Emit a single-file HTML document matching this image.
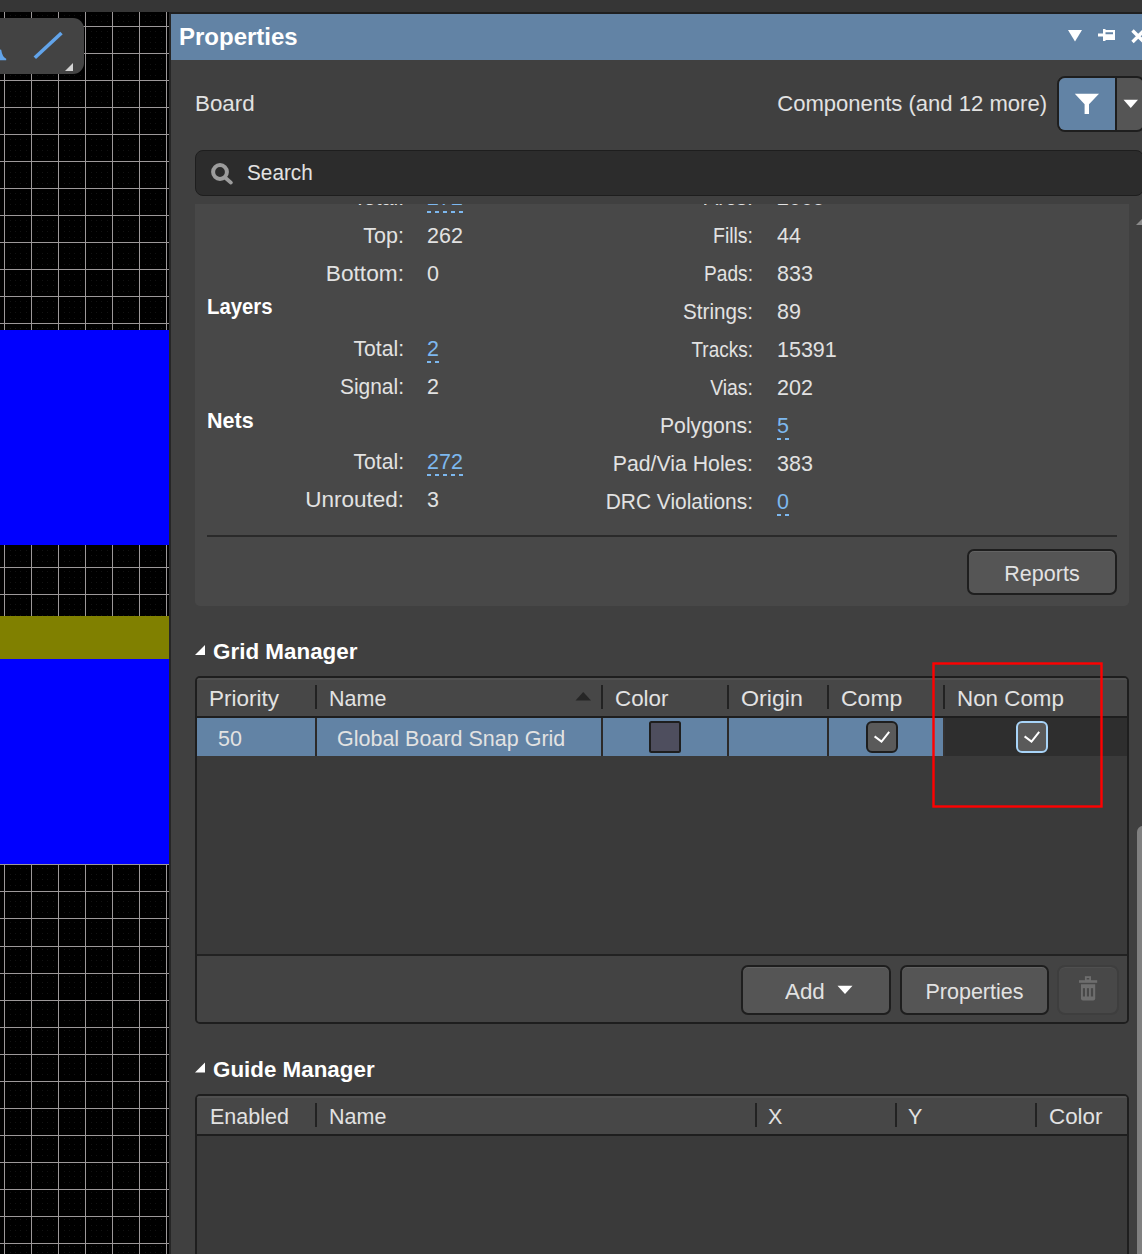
<!DOCTYPE html>
<html><head><meta charset="utf-8"><style>
html,body{margin:0;padding:0;width:1142px;height:1254px;overflow:hidden;background:#404040;font-family:"Liberation Sans",sans-serif;}
body{position:relative}
</style></head><body>
<div style="position:absolute;left:0px;top:0px;width:1142px;height:12px;background:#363636;"></div>
<div style="position:absolute;left:0px;top:12px;width:169px;height:1242px;background:#000;"></div>
<svg style="position:absolute;left:0;top:12px" width="169" height="1242"><defs><pattern id="dp" patternUnits="userSpaceOnUse" x="4" y="14" width="27" height="27"><g fill="#131313"><rect x="6" y="5" width="1" height="1"/><rect x="6" y="11" width="1" height="1"/><rect x="6" y="16" width="1" height="1"/><rect x="6" y="22" width="1" height="1"/><rect x="11" y="5" width="1" height="1"/><rect x="11" y="11" width="1" height="1"/><rect x="11" y="16" width="1" height="1"/><rect x="11" y="22" width="1" height="1"/><rect x="16" y="5" width="1" height="1"/><rect x="16" y="11" width="1" height="1"/><rect x="16" y="16" width="1" height="1"/><rect x="16" y="22" width="1" height="1"/><rect x="22" y="5" width="1" height="1"/><rect x="22" y="11" width="1" height="1"/><rect x="22" y="16" width="1" height="1"/><rect x="22" y="22" width="1" height="1"/></g></pattern></defs><rect width="169" height="1242" fill="url(#dp)"/></svg>
<div style="position:absolute;left:4px;top:12px;width:1px;height:1242px;background:#9c9899;"></div>
<div style="position:absolute;left:31px;top:12px;width:1px;height:1242px;background:#9c9899;"></div>
<div style="position:absolute;left:58px;top:12px;width:1px;height:1242px;background:#9c9899;"></div>
<div style="position:absolute;left:85px;top:12px;width:1px;height:1242px;background:#9c9899;"></div>
<div style="position:absolute;left:112px;top:12px;width:1px;height:1242px;background:#9c9899;"></div>
<div style="position:absolute;left:139px;top:12px;width:1px;height:1242px;background:#9c9899;"></div>
<div style="position:absolute;left:166px;top:12px;width:1px;height:1242px;background:#9c9899;"></div>
<div style="position:absolute;left:0px;top:26px;width:169px;height:1px;background:#9c9899;"></div>
<div style="position:absolute;left:0px;top:53px;width:169px;height:1px;background:#9c9899;"></div>
<div style="position:absolute;left:0px;top:80px;width:169px;height:1px;background:#9c9899;"></div>
<div style="position:absolute;left:0px;top:107px;width:169px;height:1px;background:#9c9899;"></div>
<div style="position:absolute;left:0px;top:134px;width:169px;height:1px;background:#9c9899;"></div>
<div style="position:absolute;left:0px;top:161px;width:169px;height:1px;background:#9c9899;"></div>
<div style="position:absolute;left:0px;top:188px;width:169px;height:1px;background:#9c9899;"></div>
<div style="position:absolute;left:0px;top:215px;width:169px;height:1px;background:#9c9899;"></div>
<div style="position:absolute;left:0px;top:242px;width:169px;height:1px;background:#9c9899;"></div>
<div style="position:absolute;left:0px;top:269px;width:169px;height:1px;background:#9c9899;"></div>
<div style="position:absolute;left:0px;top:296px;width:169px;height:1px;background:#9c9899;"></div>
<div style="position:absolute;left:0px;top:323px;width:169px;height:1px;background:#9c9899;"></div>
<div style="position:absolute;left:0px;top:350px;width:169px;height:1px;background:#9c9899;"></div>
<div style="position:absolute;left:0px;top:377px;width:169px;height:1px;background:#9c9899;"></div>
<div style="position:absolute;left:0px;top:405px;width:169px;height:1px;background:#9c9899;"></div>
<div style="position:absolute;left:0px;top:432px;width:169px;height:1px;background:#9c9899;"></div>
<div style="position:absolute;left:0px;top:459px;width:169px;height:1px;background:#9c9899;"></div>
<div style="position:absolute;left:0px;top:486px;width:169px;height:1px;background:#9c9899;"></div>
<div style="position:absolute;left:0px;top:513px;width:169px;height:1px;background:#9c9899;"></div>
<div style="position:absolute;left:0px;top:540px;width:169px;height:1px;background:#9c9899;"></div>
<div style="position:absolute;left:0px;top:567px;width:169px;height:1px;background:#9c9899;"></div>
<div style="position:absolute;left:0px;top:594px;width:169px;height:1px;background:#9c9899;"></div>
<div style="position:absolute;left:0px;top:621px;width:169px;height:1px;background:#9c9899;"></div>
<div style="position:absolute;left:0px;top:648px;width:169px;height:1px;background:#9c9899;"></div>
<div style="position:absolute;left:0px;top:675px;width:169px;height:1px;background:#9c9899;"></div>
<div style="position:absolute;left:0px;top:702px;width:169px;height:1px;background:#9c9899;"></div>
<div style="position:absolute;left:0px;top:729px;width:169px;height:1px;background:#9c9899;"></div>
<div style="position:absolute;left:0px;top:756px;width:169px;height:1px;background:#9c9899;"></div>
<div style="position:absolute;left:0px;top:783px;width:169px;height:1px;background:#9c9899;"></div>
<div style="position:absolute;left:0px;top:810px;width:169px;height:1px;background:#9c9899;"></div>
<div style="position:absolute;left:0px;top:837px;width:169px;height:1px;background:#9c9899;"></div>
<div style="position:absolute;left:0px;top:864px;width:169px;height:1px;background:#9c9899;"></div>
<div style="position:absolute;left:0px;top:891px;width:169px;height:1px;background:#9c9899;"></div>
<div style="position:absolute;left:0px;top:918px;width:169px;height:1px;background:#9c9899;"></div>
<div style="position:absolute;left:0px;top:946px;width:169px;height:1px;background:#9c9899;"></div>
<div style="position:absolute;left:0px;top:973px;width:169px;height:1px;background:#9c9899;"></div>
<div style="position:absolute;left:0px;top:1000px;width:169px;height:1px;background:#9c9899;"></div>
<div style="position:absolute;left:0px;top:1027px;width:169px;height:1px;background:#9c9899;"></div>
<div style="position:absolute;left:0px;top:1054px;width:169px;height:1px;background:#9c9899;"></div>
<div style="position:absolute;left:0px;top:1081px;width:169px;height:1px;background:#9c9899;"></div>
<div style="position:absolute;left:0px;top:1108px;width:169px;height:1px;background:#9c9899;"></div>
<div style="position:absolute;left:0px;top:1135px;width:169px;height:1px;background:#9c9899;"></div>
<div style="position:absolute;left:0px;top:1162px;width:169px;height:1px;background:#9c9899;"></div>
<div style="position:absolute;left:0px;top:1189px;width:169px;height:1px;background:#9c9899;"></div>
<div style="position:absolute;left:0px;top:1216px;width:169px;height:1px;background:#9c9899;"></div>
<div style="position:absolute;left:0px;top:1243px;width:169px;height:1px;background:#9c9899;"></div>
<div style="position:absolute;left:0px;top:330px;width:169px;height:215px;background:#0000ff;"></div>
<div style="position:absolute;left:0px;top:616px;width:169px;height:43px;background:#808000;"></div>
<div style="position:absolute;left:0px;top:659px;width:169px;height:205px;background:#0000ff;"></div>
<div style="position:absolute;left:-12px;top:18px;width:96px;height:56px;background:#434343;border-radius:11px;"></div>
<svg style="position:absolute;left:0;top:0" width="90" height="80"><line x1="34.8" y1="57.8" x2="61.5" y2="33" stroke="#62a4ea" stroke-width="3.6"/><polygon points="65,71 73,63 73,71" fill="#d4d4d4"/><path d="M0,49.5 L1.2,49.8 Q2.3,57.2 6.2,58.8 L6.2,60.3 L0,60.3 Z" fill="#62a4ea"/></svg>
<div style="position:absolute;left:169px;top:12px;width:2px;height:1242px;background:#262626;"></div>
<div style="position:absolute;left:169px;top:12px;width:973px;height:2px;background:#1f1f1f;"></div>
<div style="position:absolute;left:171px;top:14px;width:971px;height:1240px;background:#404040;"></div>
<div style="position:absolute;left:171px;top:14px;width:971px;height:46px;background:#6283a5;"></div>
<div style="position:absolute;left:179px;top:25.48px;font-size:24px;line-height:24px;font-weight:700;color:#fff;white-space:nowrap;">Properties</div>
<svg style="position:absolute;left:1060px;top:20px" width="82" height="30"><polygon points="8,10 22,10 15,21.5" fill="#fff"/><rect x="38" y="13.5" width="6" height="3" fill="#fff"/><rect x="43" y="9" width="2.5" height="12" fill="#fff"/><path d="M45,10 H55 V20 H45 Z M45,12.2 V14.2 H53 V12.2 Z" fill="#fff" fill-rule="evenodd"/><path d="M72.5,10.5 L84,22 M72.5,22 L84,10.5" stroke="#fff" stroke-width="3.4"/></svg>
<div style="position:absolute;left:195px;top:93.60px;font-size:21.5px;line-height:21.5px;font-weight:400;color:#e2e2e2;white-space:nowrap;transform:scale(1.04,1.045);transform-origin:0 18.20px;">Board</div>
<div style="position:absolute;left:447px;width:600px;text-align:right;top:93.60px;font-size:21.5px;line-height:21.5px;font-weight:400;color:#e2e2e2;white-space:nowrap;transform:scale(1.026,1.045);transform-origin:100% 18.20px;">Components (and 12 more)</div>
<div style="position:absolute;left:1057px;top:76px;width:88px;height:56px;box-sizing:border-box;border:2px solid #1e1e1e;border-radius:8px;background:#555;overflow:hidden"><div style="position:absolute;left:0;top:0;width:56px;height:52px;background:#6283a5"></div><div style="position:absolute;left:56px;top:0;width:2px;height:52px;background:#1e1e1e"></div></div>
<svg style="position:absolute;left:1070px;top:90px" width="72" height="30"><polygon points="4.8,3.8 29,3.8 19,14.3 19,24.1 14.6,24.1 14.6,14.3" fill="#fff"/><polygon points="53.5,9.8 68,9.8 60.75,17.9" fill="#fff"/></svg>
<div style="position:absolute;left:195px;top:150px;width:949px;height:46px;box-sizing:border-box;border:1.5px solid #1e1e1e;border-radius:8px;background:#2c2c2c"></div>
<svg style="position:absolute;left:205px;top:158px" width="34" height="34"><circle cx="15" cy="14" r="6.9" stroke="#9d9d9d" stroke-width="4" fill="none"/><line x1="20" y1="19.5" x2="25.9" y2="24.6" stroke="#9d9d9d" stroke-width="3.8" stroke-linecap="round"/></svg>
<div style="position:absolute;left:247px;top:162.60px;font-size:21.5px;line-height:21.5px;font-weight:400;color:#e2e2e2;white-space:nowrap;transform:scale(0.965,1.045);transform-origin:0 18.20px;">Search</div>
<div style="position:absolute;left:195px;top:204px;width:934px;height:402px;background:#484848;border-radius:0 0 5px 5px;overflow:hidden">
<div style="position:absolute;left:-391px;width:600px;text-align:right;top:-15.90px;font-size:21.5px;line-height:21.5px;font-weight:400;color:#e2e2e2;white-space:nowrap;transform:scale(0.982,1.045);transform-origin:100% 18.20px;">Total:</div>
<div style="position:absolute;left:-391px;width:600px;text-align:right;top:21.60px;font-size:21.5px;line-height:21.5px;font-weight:400;color:#e2e2e2;white-space:nowrap;transform:scale(1.0,1.045);transform-origin:100% 18.20px;">Top:</div>
<div style="position:absolute;left:-391px;width:600px;text-align:right;top:59.60px;font-size:21.5px;line-height:21.5px;font-weight:400;color:#e2e2e2;white-space:nowrap;transform:scale(1.056,1.045);transform-origin:100% 18.20px;">Bottom:</div>
<div style="position:absolute;left:-391px;width:600px;text-align:right;top:134.60px;font-size:21.5px;line-height:21.5px;font-weight:400;color:#e2e2e2;white-space:nowrap;transform:scale(0.982,1.045);transform-origin:100% 18.20px;">Total:</div>
<div style="position:absolute;left:-391px;width:600px;text-align:right;top:172.60px;font-size:21.5px;line-height:21.5px;font-weight:400;color:#e2e2e2;white-space:nowrap;transform:scale(0.975,1.045);transform-origin:100% 18.20px;">Signal:</div>
<div style="position:absolute;left:-391px;width:600px;text-align:right;top:247.60px;font-size:21.5px;line-height:21.5px;font-weight:400;color:#e2e2e2;white-space:nowrap;transform:scale(0.982,1.045);transform-origin:100% 18.20px;">Total:</div>
<div style="position:absolute;left:-391px;width:600px;text-align:right;top:285.60px;font-size:21.5px;line-height:21.5px;font-weight:400;color:#e2e2e2;white-space:nowrap;transform:scale(1.047,1.045);transform-origin:100% 18.20px;">Unrouted:</div>
<div style="position:absolute;left:232px;top:-15.90px;font-size:21.5px;line-height:21.5px;font-weight:400;color:#7db8ef;white-space:nowrap;transform:scale(1.0,1.045);transform-origin:0 18.20px;">272</div>
<div style="position:absolute;left:232px;top:7px;width:36px;height:2px;background:repeating-linear-gradient(90deg,#7db8ef 0 4px,transparent 4px 8px)"></div>
<div style="position:absolute;left:232px;top:21.60px;font-size:21.5px;line-height:21.5px;font-weight:400;color:#e2e2e2;white-space:nowrap;transform:scale(1.0,1.045);transform-origin:0 18.20px;">262</div>
<div style="position:absolute;left:232px;top:59.60px;font-size:21.5px;line-height:21.5px;font-weight:400;color:#e2e2e2;white-space:nowrap;transform:scale(1.0,1.045);transform-origin:0 18.20px;">0</div>
<div style="position:absolute;left:232px;top:134.60px;font-size:21.5px;line-height:21.5px;font-weight:400;color:#7db8ef;white-space:nowrap;transform:scale(1.0,1.045);transform-origin:0 18.20px;">2</div>
<div style="position:absolute;left:232px;top:157px;width:12px;height:2px;background:repeating-linear-gradient(90deg,#7db8ef 0 4px,transparent 4px 8px)"></div>
<div style="position:absolute;left:232px;top:172.60px;font-size:21.5px;line-height:21.5px;font-weight:400;color:#e2e2e2;white-space:nowrap;transform:scale(1.0,1.045);transform-origin:0 18.20px;">2</div>
<div style="position:absolute;left:232px;top:247.60px;font-size:21.5px;line-height:21.5px;font-weight:400;color:#7db8ef;white-space:nowrap;transform:scale(1.0,1.045);transform-origin:0 18.20px;">272</div>
<div style="position:absolute;left:232px;top:270px;width:36px;height:2px;background:repeating-linear-gradient(90deg,#7db8ef 0 4px,transparent 4px 8px)"></div>
<div style="position:absolute;left:232px;top:285.60px;font-size:21.5px;line-height:21.5px;font-weight:400;color:#e2e2e2;white-space:nowrap;transform:scale(1.0,1.045);transform-origin:0 18.20px;">3</div>
<div style="position:absolute;left:12px;top:92.60px;font-size:21.5px;line-height:21.5px;font-weight:700;color:#fff;white-space:nowrap;transform:scale(0.945,1.0);transform-origin:0 18.20px;">Layers</div>
<div style="position:absolute;left:12px;top:206.60px;font-size:21.5px;line-height:21.5px;font-weight:700;color:#fff;white-space:nowrap;">Nets</div>
<div style="position:absolute;left:-42px;width:600px;text-align:right;top:-15.90px;font-size:21.5px;line-height:21.5px;font-weight:400;color:#e2e2e2;white-space:nowrap;transform:scale(1.0,1.045);transform-origin:100% 18.20px;">Arcs:</div>
<div style="position:absolute;left:582px;top:-15.90px;font-size:21.5px;line-height:21.5px;font-weight:400;color:#e2e2e2;white-space:nowrap;transform:scale(1.0,1.045);transform-origin:0 18.20px;">2005</div>
<div style="position:absolute;left:-42px;width:600px;text-align:right;top:21.60px;font-size:21.5px;line-height:21.5px;font-weight:400;color:#e2e2e2;white-space:nowrap;transform:scale(0.905,1.045);transform-origin:100% 18.20px;">Fills:</div>
<div style="position:absolute;left:582px;top:21.60px;font-size:21.5px;line-height:21.5px;font-weight:400;color:#e2e2e2;white-space:nowrap;transform:scale(1.0,1.045);transform-origin:0 18.20px;">44</div>
<div style="position:absolute;left:-42px;width:600px;text-align:right;top:59.60px;font-size:21.5px;line-height:21.5px;font-weight:400;color:#e2e2e2;white-space:nowrap;transform:scale(0.89,1.045);transform-origin:100% 18.20px;">Pads:</div>
<div style="position:absolute;left:582px;top:59.60px;font-size:21.5px;line-height:21.5px;font-weight:400;color:#e2e2e2;white-space:nowrap;transform:scale(1.0,1.045);transform-origin:0 18.20px;">833</div>
<div style="position:absolute;left:-42px;width:600px;text-align:right;top:97.60px;font-size:21.5px;line-height:21.5px;font-weight:400;color:#e2e2e2;white-space:nowrap;transform:scale(0.96,1.045);transform-origin:100% 18.20px;">Strings:</div>
<div style="position:absolute;left:582px;top:97.60px;font-size:21.5px;line-height:21.5px;font-weight:400;color:#e2e2e2;white-space:nowrap;transform:scale(1.0,1.045);transform-origin:0 18.20px;">89</div>
<div style="position:absolute;left:-42px;width:600px;text-align:right;top:135.60px;font-size:21.5px;line-height:21.5px;font-weight:400;color:#e2e2e2;white-space:nowrap;transform:scale(0.883,1.045);transform-origin:100% 18.20px;">Tracks:</div>
<div style="position:absolute;left:582px;top:135.60px;font-size:21.5px;line-height:21.5px;font-weight:400;color:#e2e2e2;white-space:nowrap;transform:scale(1.0,1.045);transform-origin:0 18.20px;">15391</div>
<div style="position:absolute;left:-42px;width:600px;text-align:right;top:173.60px;font-size:21.5px;line-height:21.5px;font-weight:400;color:#e2e2e2;white-space:nowrap;transform:scale(0.904,1.045);transform-origin:100% 18.20px;">Vias:</div>
<div style="position:absolute;left:582px;top:173.60px;font-size:21.5px;line-height:21.5px;font-weight:400;color:#e2e2e2;white-space:nowrap;transform:scale(1.0,1.045);transform-origin:0 18.20px;">202</div>
<div style="position:absolute;left:-42px;width:600px;text-align:right;top:211.60px;font-size:21.5px;line-height:21.5px;font-weight:400;color:#e2e2e2;white-space:nowrap;transform:scale(0.985,1.045);transform-origin:100% 18.20px;">Polygons:</div>
<div style="position:absolute;left:582px;top:211.60px;font-size:21.5px;line-height:21.5px;font-weight:400;color:#7db8ef;white-space:nowrap;transform:scale(1.0,1.045);transform-origin:0 18.20px;">5</div>
<div style="position:absolute;left:582px;top:234px;width:12px;height:2px;background:repeating-linear-gradient(90deg,#7db8ef 0 4px,transparent 4px 8px)"></div>
<div style="position:absolute;left:-42px;width:600px;text-align:right;top:249.60px;font-size:21.5px;line-height:21.5px;font-weight:400;color:#e2e2e2;white-space:nowrap;transform:scale(0.989,1.045);transform-origin:100% 18.20px;">Pad/Via Holes:</div>
<div style="position:absolute;left:582px;top:249.60px;font-size:21.5px;line-height:21.5px;font-weight:400;color:#e2e2e2;white-space:nowrap;transform:scale(1.0,1.045);transform-origin:0 18.20px;">383</div>
<div style="position:absolute;left:-42px;width:600px;text-align:right;top:287.60px;font-size:21.5px;line-height:21.5px;font-weight:400;color:#e2e2e2;white-space:nowrap;transform:scale(0.973,1.045);transform-origin:100% 18.20px;">DRC Violations:</div>
<div style="position:absolute;left:582px;top:287.60px;font-size:21.5px;line-height:21.5px;font-weight:400;color:#7db8ef;white-space:nowrap;transform:scale(1.0,1.045);transform-origin:0 18.20px;">0</div>
<div style="position:absolute;left:582px;top:310px;width:12px;height:2px;background:repeating-linear-gradient(90deg,#7db8ef 0 4px,transparent 4px 8px)"></div>
<div style="position:absolute;left:12px;top:331px;width:910px;height:2px;background:#2a2a2a;"></div>
<div style="position:absolute;left:772px;top:345px;width:150px;height:46px;box-sizing:border-box;border:2px solid #1e1e1e;border-radius:7px;background:#555;box-shadow:inset 0 1px 0 #636363"></div>
<div style="position:absolute;left:547px;width:600px;text-align:center;top:359.60px;font-size:21.5px;line-height:21.5px;font-weight:400;color:#e2e2e2;white-space:nowrap;transform:scale(1.0,1.045);transform-origin:50% 18.20px;">Reports</div>
</div>
<svg style="position:absolute;left:194px;top:643px" width="14" height="14"><polygon points="11,2 11,12 1,12" fill="#fff"/></svg>
<div style="position:absolute;left:213px;top:641.18px;font-size:22px;line-height:22px;font-weight:700;color:#fff;white-space:nowrap;transform:scale(1.019,1.0);transform-origin:0 18.62px;">Grid Manager</div>
<div style="position:absolute;left:195px;top:676px;width:934px;height:348px;box-sizing:border-box;border:2px solid #1e1e1e;border-radius:5px;background:#3a3a3a;overflow:hidden">
<div style="position:absolute;left:0px;top:0px;width:932px;height:38px;background:#474747;"></div>
<div style="position:absolute;left:0px;top:0px;width:932px;height:2px;background:#505050;"></div>
<div style="position:absolute;left:0px;top:38px;width:932px;height:2px;background:#1e1e1e;"></div>
<div style="position:absolute;left:118px;top:7px;width:2px;height:24px;background:#222;"></div>
<div style="position:absolute;left:404px;top:7px;width:2px;height:24px;background:#222;"></div>
<div style="position:absolute;left:530px;top:7px;width:2px;height:24px;background:#222;"></div>
<div style="position:absolute;left:630px;top:7px;width:2px;height:24px;background:#222;"></div>
<div style="position:absolute;left:746px;top:7px;width:2px;height:24px;background:#222;"></div>
<div style="position:absolute;left:12px;top:10.60px;font-size:21.5px;line-height:21.5px;font-weight:400;color:#e2e2e2;white-space:nowrap;transform:scale(1.046,1.045);transform-origin:0 18.20px;">Priority</div>
<div style="position:absolute;left:132px;top:10.60px;font-size:21.5px;line-height:21.5px;font-weight:400;color:#e2e2e2;white-space:nowrap;transform:scale(1.0,1.045);transform-origin:0 18.20px;">Name</div>
<div style="position:absolute;left:418px;top:10.60px;font-size:21.5px;line-height:21.5px;font-weight:400;color:#e2e2e2;white-space:nowrap;transform:scale(1.04,1.045);transform-origin:0 18.20px;">Color</div>
<div style="position:absolute;left:544px;top:10.60px;font-size:21.5px;line-height:21.5px;font-weight:400;color:#e2e2e2;white-space:nowrap;transform:scale(1.08,1.045);transform-origin:0 18.20px;">Origin</div>
<div style="position:absolute;left:644px;top:10.60px;font-size:21.5px;line-height:21.5px;font-weight:400;color:#e2e2e2;white-space:nowrap;transform:scale(1.07,1.045);transform-origin:0 18.20px;">Comp</div>
<div style="position:absolute;left:760px;top:10.60px;font-size:21.5px;line-height:21.5px;font-weight:400;color:#e2e2e2;white-space:nowrap;transform:scale(1.04,1.045);transform-origin:0 18.20px;">Non Comp</div>
<svg style="position:absolute;left:378px;top:13px" width="18" height="11"><polygon points="0.5,9.5 16,9.5 8.25,1" fill="#262626"/></svg>
<div style="position:absolute;left:0px;top:40px;width:746px;height:38px;background:#6283a5;"></div>
<div style="position:absolute;left:746px;top:40px;width:186px;height:38px;background:#2e2e2e;"></div>
<div style="position:absolute;left:118px;top:40px;width:2px;height:38px;background:#2c2a29;"></div>
<div style="position:absolute;left:404px;top:40px;width:2px;height:38px;background:#2c2a29;"></div>
<div style="position:absolute;left:530px;top:40px;width:2px;height:38px;background:#2c2a29;"></div>
<div style="position:absolute;left:630px;top:40px;width:2px;height:38px;background:#2c2a29;"></div>
<div style="position:absolute;left:746px;top:40px;width:2px;height:38px;background:#343232;"></div>
<div style="position:absolute;left:21px;top:50.60px;font-size:21.5px;line-height:21.5px;font-weight:400;color:#e2e2e2;white-space:nowrap;transform:scale(1.0,1.045);transform-origin:0 18.20px;">50</div>
<div style="position:absolute;left:140px;top:50.60px;font-size:21.5px;line-height:21.5px;font-weight:400;color:#e2e2e2;white-space:nowrap;transform:scale(1.0,1.045);transform-origin:0 18.20px;">Global Board Snap Grid</div>
<div style="position:absolute;left:452px;top:43px;width:32px;height:32px;background:#4e4e5e;box-sizing:border-box;border:2px solid #1e1e1e;border-radius:2.5px;"></div>
<div style="position:absolute;left:669px;top:43px;width:32px;height:32px;background:#5a5a5a;box-sizing:border-box;border:2px solid #1e1e1e;border-radius:6px;"></div>
<div style="position:absolute;left:819px;top:43px;width:32px;height:32px;background:#5a5a5a;box-sizing:border-box;border:2px solid #a8d4f8;border-radius:6px;"></div>
<svg style="position:absolute;left:675px;top:49px" width="20" height="20"><polyline points="2.6,9.4 9.5,14.6 17.2,4.8" stroke="#fff" stroke-width="2" fill="none"/></svg>
<svg style="position:absolute;left:825px;top:49px" width="20" height="20"><polyline points="2.6,9.4 9.5,14.6 17.2,4.8" stroke="#fff" stroke-width="2" fill="none"/></svg>
<div style="position:absolute;left:0px;top:276px;width:932px;height:2px;background:#222;"></div>
<div style="position:absolute;left:0px;top:278px;width:932px;height:66px;background:#434343;"></div>
<div style="position:absolute;left:544px;top:287px;width:150px;height:50px;box-sizing:border-box;border:2px solid #1e1e1e;border-radius:7px;background:#555;box-shadow:inset 0 1px 0 #636363"></div>
<div style="position:absolute;left:588px;top:303.60px;font-size:21.5px;line-height:21.5px;font-weight:400;color:#e2e2e2;white-space:nowrap;transform:scale(1.04,1.045);transform-origin:0 18.20px;">Add</div>
<svg style="position:absolute;left:639px;top:306px" width="18" height="12"><polygon points="1.5,1.8 16.5,1.8 9,10" fill="#fff"/></svg>
<div style="position:absolute;left:703px;top:287px;width:149px;height:50px;box-sizing:border-box;border:2px solid #1e1e1e;border-radius:7px;background:#555;box-shadow:inset 0 1px 0 #636363"></div>
<div style="position:absolute;left:477.5px;width:600px;text-align:center;top:303.60px;font-size:21.5px;line-height:21.5px;font-weight:400;color:#e2e2e2;white-space:nowrap;transform:scale(1.0,1.045);transform-origin:50% 18.20px;">Properties</div>
<div style="position:absolute;left:860px;top:287px;width:62px;height:50px;box-sizing:border-box;border:2px solid #3e3e3e;border-radius:8px;background:#484848;box-shadow:inset 0 1px 0 #4f4f4f"></div>
<svg style="position:absolute;left:879px;top:296px" width="24" height="30"><rect x="3" y="6.2" width="18.2" height="2.6" fill="#6e6e6e"/><rect x="9.8" y="3.1" width="4.3" height="3.3" fill="none" stroke="#6e6e6e" stroke-width="1.8"/><path d="M5,10.2 H19.2 V24.5 Q19.2,26.5 17.2,26.5 H7 Q5,26.5 5,24.5 Z" fill="#6e6e6e"/><rect x="6.9" y="14.2" width="2.1" height="8.3" fill="#484848"/><rect x="10.9" y="14.2" width="2.1" height="8.3" fill="#484848"/><rect x="14.9" y="14.2" width="2.2" height="8.3" fill="#484848"/></svg>
</div>
<svg style="position:absolute;left:920px;top:650px" width="200" height="170"><rect x="13.5" y="13.5" width="168" height="143" fill="none" stroke="#ff0000" stroke-width="2.4"/></svg>
<svg style="position:absolute;left:194px;top:1061px" width="14" height="14"><polygon points="11,1.5 11,11.5 1,11.5" fill="#fff"/></svg>
<div style="position:absolute;left:213px;top:1059.18px;font-size:22px;line-height:22px;font-weight:700;color:#fff;white-space:nowrap;transform:scale(1.017,1.0);transform-origin:0 18.62px;">Guide Manager</div>
<div style="position:absolute;left:195px;top:1094px;width:934px;height:200px;box-sizing:border-box;border:2px solid #1e1e1e;border-radius:5px;background:#3a3a3a;overflow:hidden">
<div style="position:absolute;left:0px;top:0px;width:932px;height:38px;background:#474747;"></div>
<div style="position:absolute;left:0px;top:0px;width:932px;height:2px;background:#505050;"></div>
<div style="position:absolute;left:0px;top:38px;width:932px;height:2px;background:#1e1e1e;"></div>
<div style="position:absolute;left:118px;top:7px;width:2px;height:24px;background:#222;"></div>
<div style="position:absolute;left:558px;top:7px;width:2px;height:24px;background:#222;"></div>
<div style="position:absolute;left:698px;top:7px;width:2px;height:24px;background:#222;"></div>
<div style="position:absolute;left:838px;top:7px;width:2px;height:24px;background:#222;"></div>
<div style="position:absolute;left:13px;top:10.60px;font-size:21.5px;line-height:21.5px;font-weight:400;color:#e2e2e2;white-space:nowrap;transform:scale(1.0,1.045);transform-origin:0 18.20px;">Enabled</div>
<div style="position:absolute;left:132px;top:10.60px;font-size:21.5px;line-height:21.5px;font-weight:400;color:#e2e2e2;white-space:nowrap;transform:scale(1.0,1.045);transform-origin:0 18.20px;">Name</div>
<div style="position:absolute;left:571px;top:10.60px;font-size:21.5px;line-height:21.5px;font-weight:400;color:#e2e2e2;white-space:nowrap;transform:scale(1.0,1.045);transform-origin:0 18.20px;">X</div>
<div style="position:absolute;left:711px;top:10.60px;font-size:21.5px;line-height:21.5px;font-weight:400;color:#e2e2e2;white-space:nowrap;transform:scale(1.0,1.045);transform-origin:0 18.20px;">Y</div>
<div style="position:absolute;left:852px;top:10.60px;font-size:21.5px;line-height:21.5px;font-weight:400;color:#e2e2e2;white-space:nowrap;transform:scale(1.04,1.045);transform-origin:0 18.20px;">Color</div>
</div>
<svg style="position:absolute;left:1130px;top:214px" width="12" height="14"><polygon points="6,11 12,5 12,11" fill="#8a8a8a"/></svg>
<div style="position:absolute;left:1137px;top:826px;width:12px;height:428px;background:#808080;border-radius:6px 0 0 0;"></div>
</body></html>
